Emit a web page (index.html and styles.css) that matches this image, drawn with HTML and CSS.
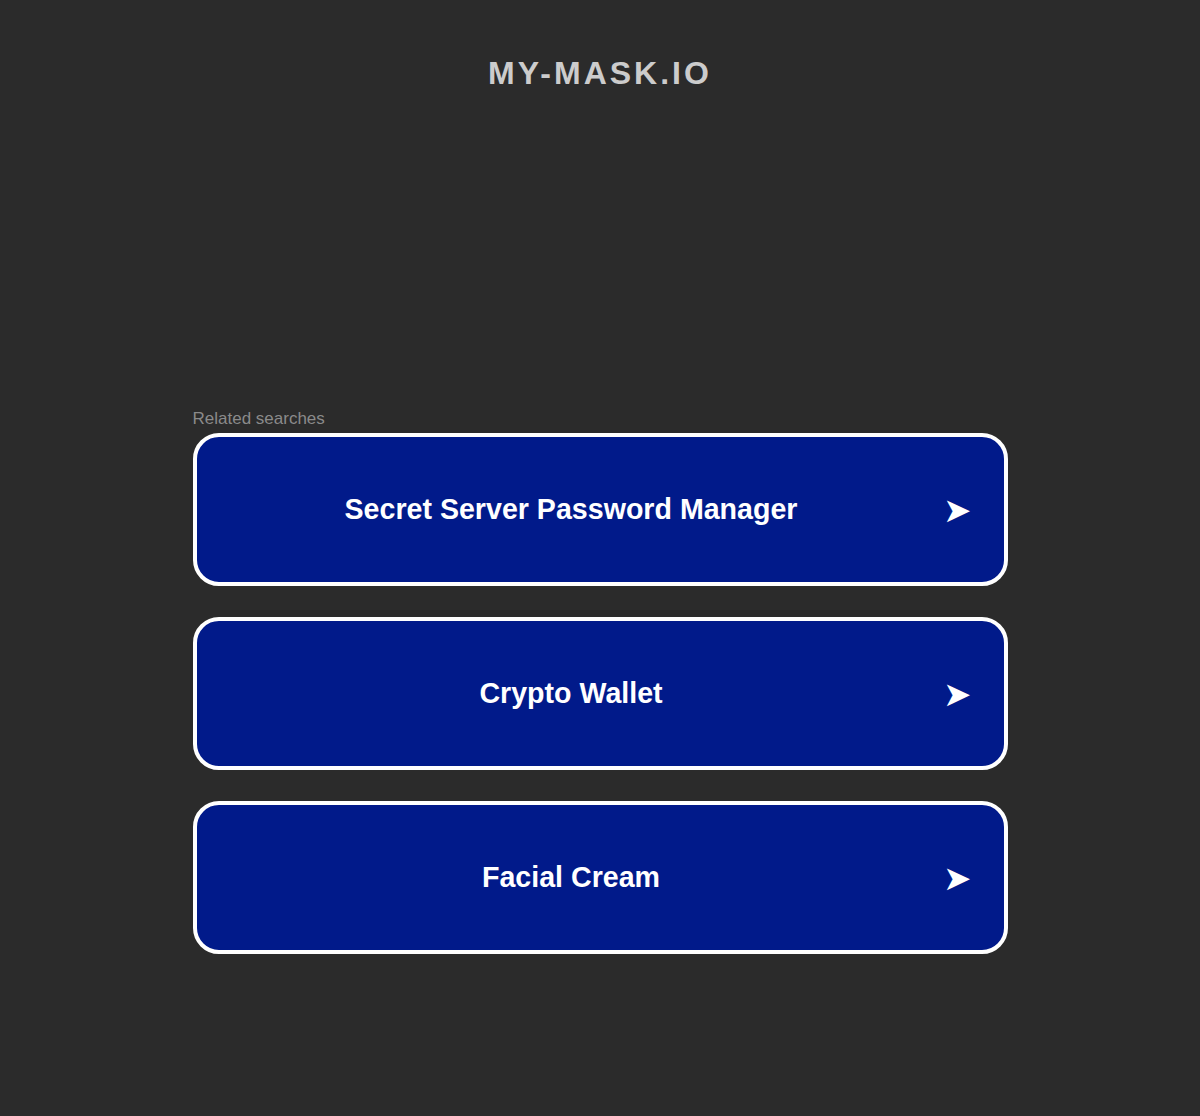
FILE: index.html
```html
<!DOCTYPE html>
<html lang="en">
<head>
  <meta charset="UTF-8" />
  <title>my-mask.io</title>
  <link rel="stylesheet" href="styles.css">
</head>
<body>
  <!-- TOPO -->
  <header class="domain">
    <h1>MY-MASK.IO</h1>
  </header>

  <!-- BUSCAS RELACIONADAS -->
  <section class="related">
    <p class="related-title">Related searches</p>
    <a class="search-box" href="#">
      <span class="search-text">Secret Server Password Manager</span>
      <span class="search-arrow">➤</span>
    </a>
    <a class="search-box" href="#">
      <span class="search-text">Crypto Wallet</span>
      <span class="search-arrow">➤</span>
    </a>
    <a class="search-box" href="#">
      <span class="search-text">Facial Cream</span>
      <span class="search-arrow">➤</span>
    </a>
  </section>
</body>
</html>
```

FILE: styles.css
```css
:root {
  --bg:#2b2b2b;
  --box:#011a8a;
  --title:#cccccc;
  --muted:#8a8a8a;
}
* {
  box-sizing: border-box;
}
body {
  margin: 0;
  font-family: Arial, 'Liberation Sans', sans-serif;
  background: var(--bg);
  min-height: 1116px;
}

/* titulo do dominio */
.domain {
  padding-top: 53px;
  text-align: center;
}
.domain h1 {
  margin: 0;
  font-size: 32px;
  line-height: 40px;
  letter-spacing: 3px;
  font-weight: 700;
  color: var(--title);
}

/* lista de buscas */
.related {
  width: 815px;
  margin: 316px auto 0;
}
.related-title {
  margin: 0 0 4px;
  font-size: 17px;
  line-height: 20px;
  color: var(--muted);
}
.search-box {
  display: flex;
  align-items: center;
  height: 153px;
  margin-bottom: 31px;
  padding-left: 3px;
  background: var(--box);
  border: 4px solid #fff;
  border-radius: 26px;
  color: #fff;
  text-decoration: none;
}
.search-text {
  flex: 1;
  text-align: center;
  font-size: 28.6px;
  font-weight: 700;
}
.search-arrow {
  margin-right: 33px;
  font-size: 34px;
  line-height: 1;
}
```
